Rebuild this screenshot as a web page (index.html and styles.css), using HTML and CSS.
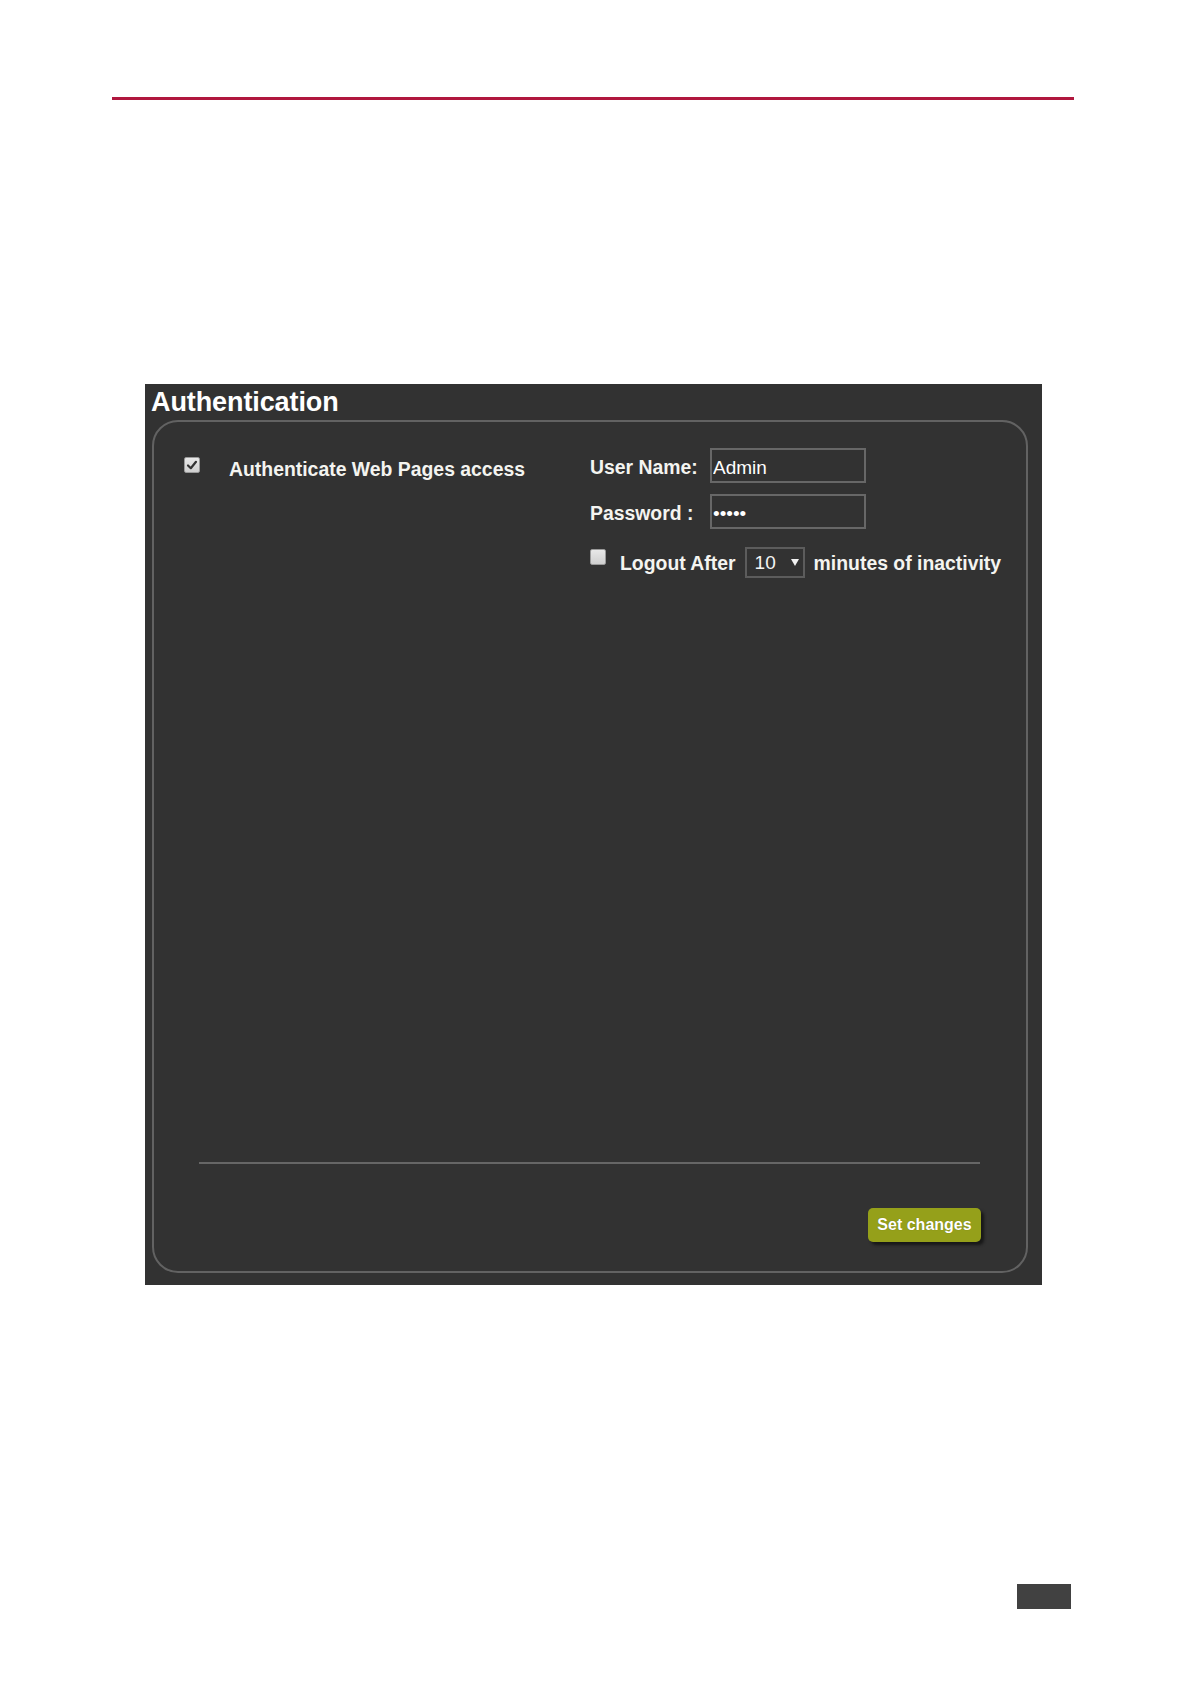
FILE: index.html
```html
<!DOCTYPE html>
<html lang="en">
<head>
<meta charset="utf-8">
<title>Authentication</title>
<link rel="stylesheet" href="styles.css">
</head>
<body>
<div class="page">
  <div class="rule"></div>
  <section class="panel">
    <h2 class="panel-title">Authentication</h2>
    <div class="box">
      <div class="form">
        <div class="col-left">
          <span class="check checked" role="checkbox" aria-checked="true">
            <svg width="12" height="12" viewBox="0 0 12 12"><path d="M2 6.5 L4.8 9.2 L10 2.8" fill="none" stroke="#333" stroke-width="2.2" stroke-linecap="round" stroke-linejoin="round"/></svg>
          </span>
          <span class="label left-label">Authenticate Web Pages access</span>
        </div>
        <div class="col-right">
          <div class="row">
            <span class="label field-label">User Name:</span>
            <input class="field" type="text" value="Admin">
          </div>
          <div class="row row-pass">
            <span class="label field-label">Password :</span>
            <input class="field" type="password" value="admin">
          </div>
          <div class="row row-logout">
            <span class="check" role="checkbox" aria-checked="false"></span>
            <span class="label">Logout After</span>
            <span class="select">10
              <svg class="arrow" width="8" height="7" viewBox="0 0 8 7"><path d="M0 0 H8 L4 7 Z" fill="#f2f2f2"/></svg>
            </span>
            <span class="label">minutes of inactivity</span>
          </div>
        </div>
      </div>
      <div class="sep"></div>
      <div class="actions">
        <button class="btn" type="button">Set changes</button>
      </div>
    </div>
  </section>
  <div class="page-mark"></div>
</div>
</body>
</html>
```
FILE: styles.css
```css
html, body {
  margin: 0;
  padding: 0;
  background: #ffffff;
}

body {
  font-family: "Liberation Sans", Arial, sans-serif;
}

.page {
  padding-top: 97px;
  width: 1191px;
}

.rule {
  margin-left: 112px;
  width: 962px;
  height: 3px;
  background: #b0173e;
}

.panel {
  margin-top: 284px;
  margin-left: 145px;
  width: 897px;
  height: 901px;
  box-sizing: border-box;
  background: #323232;
  padding-top: 4px;
  display: flex;
  flex-direction: column;
}

.panel-title {
  margin: 0 0 3px 6px;
  font-size: 27px;
  line-height: 29px;
  font-weight: bold;
  color: #ffffff;
  letter-spacing: -0.1px;
}

.box {
  margin-left: 7px;
  width: 876px;
  height: 853px;
  box-sizing: border-box;
  border: 2px solid #626262;
  border-radius: 26px;
  display: flex;
  flex-direction: column;
}

.form {
  flex: 1;
  display: flex;
  padding: 26px 0 0 30px;
}

.label {
  font-size: 19.4px;
  font-weight: bold;
  color: #f4f4f0;
  line-height: 22px;
  white-space: nowrap;
}

.col-left {
  width: 406px;
  display: flex;
  align-items: flex-start;
}

.col-left .check {
  margin-top: 9px;
}

.left-label {
  margin-left: 29px;
  margin-top: 10px;
}

.check {
  width: 16px;
  height: 16px;
  box-sizing: border-box;
  flex: none;
  border: 1px solid #9a9a9a;
  border-radius: 2px;
  background: linear-gradient(#e8e8e8, #cfcfcf);
  display: flex;
  align-items: center;
  justify-content: center;
}

.col-right {
  display: flex;
  flex-direction: column;
}

.row {
  display: flex;
  align-items: baseline;
}

.row-pass {
  margin-top: 11px;
}

.field-label {
  width: 120px;
}

.field {
  width: 156px;
  height: 35px;
  box-sizing: border-box;
  border: 2px solid #676767;
  background: #323232;
  color: #ffffff;
  font-family: "Liberation Sans", Arial, sans-serif;
  font-size: 19px;
  padding: 5px 1px 0;
  margin: 0;
  outline: none;
}

.row-logout {
  margin-top: 18px;
  align-items: center;
  height: 31px;
}

.row-logout .check {
  align-self: flex-start;
  margin-top: 2px;
  margin-right: 14px;
}

.select {
  margin: 0 9px;
  width: 60px;
  height: 31px;
  box-sizing: border-box;
  border: 2px solid #5c5c5c;
  display: flex;
  align-items: center;
  padding: 1px 0 0 8px;
  font-size: 19px;
  color: #f4f4f4;
}

.arrow {
  margin-left: 15px;
  margin-top: -2px;
}

.sep {
  margin-left: 45px;
  width: 781px;
  height: 2px;
  background: #666666;
}

.actions {
  display: flex;
  justify-content: flex-end;
  padding: 44px 45px 29px 0;
}

.btn {
  width: 113px;
  height: 34px;
  margin: 0;
  padding: 0;
  border: none;
  border-radius: 5px;
  background: #95a01a;
  color: #ffffff;
  font-family: "Liberation Sans", Arial, sans-serif;
  font-size: 16px;
  font-weight: bold;
  box-shadow: 3px 3px 3px #181818;
  text-shadow: 0 0 1px rgba(0, 0, 0, 0.3);
}

.page-mark {
  margin-top: 299px;
  margin-left: 1017px;
  width: 54px;
  height: 25px;
  background: #414141;
}
```
